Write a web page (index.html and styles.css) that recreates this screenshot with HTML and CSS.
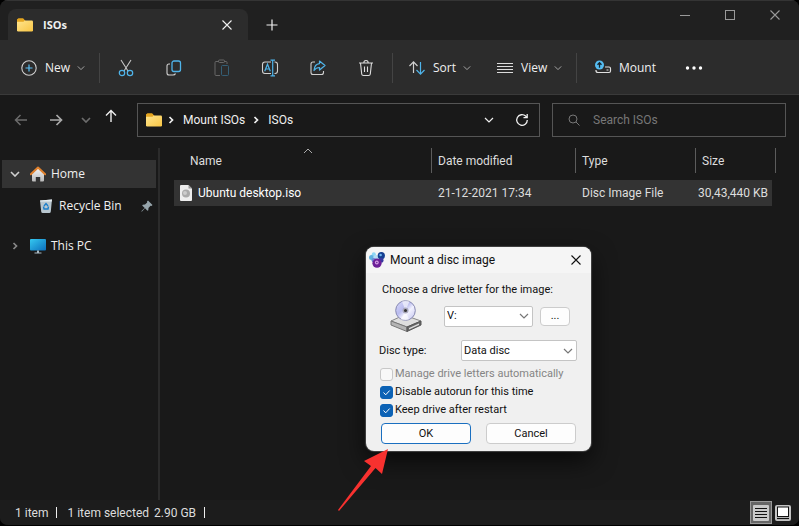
FILE: index.html
```html
<!DOCTYPE html>
<html lang="en">
<head>
<meta charset="utf-8">
<title>ISOs</title>
<link rel="stylesheet" href="styles.css">
</head>
<body>
<svg class="defs" aria-hidden="true">
  <defs>
    <linearGradient id="gold" x1="0" y1="0" x2="1" y2="1"><stop offset="0" stop-color="#ffe58e"/><stop offset="1" stop-color="#f8c544"/></linearGradient>
    <linearGradient id="screen" x1="0" y1="0" x2="1" y2="1"><stop offset="0" stop-color="#35c8f0"/><stop offset="1" stop-color="#0c6fbd"/></linearGradient>
    <linearGradient id="wall" x1="0" y1="0" x2="0" y2="1"><stop offset="0" stop-color="#f5f5f5"/><stop offset="1" stop-color="#b9b9b9"/></linearGradient>
    <linearGradient id="disc" x1="0" y1="0" x2="1" y2="1"><stop offset="0" stop-color="#d9dafa"/><stop offset=".4" stop-color="#b9bbee"/><stop offset=".6" stop-color="#f2f2ff"/><stop offset="1" stop-color="#c0c1ee"/></linearGradient>
    <symbol id="folder" viewBox="0 0 16 14"><path d="M0 2Q0 .5 1.500 .5H6L8 2.500V7H0Z" fill="#e5a51f"/><rect y="2.500" width="16" height="11" rx="1.200" fill="url(#gold)"/><path d="M0 3Q0 .5 1.500 .5H6Q7 .5 7.500 2.500L6.500 3.800H0Z" fill="#e5a51f"/></symbol>
    <symbol id="down" viewBox="0 0 10 6"><path d="M1 1l4 4 4-4" fill="none" stroke="currentColor" stroke-width="1.200"/></symbol>
    <symbol id="right" viewBox="0 0 6 10"><path d="M1.500 2L4.500 5 1.500 8" fill="none" stroke="currentColor" stroke-width="1.700"/></symbol>
    <symbol id="cross" viewBox="0 0 10 10"><path d="M.5 .5l9 9M9.500 .5l-9 9" fill="none" stroke="currentColor" stroke-width="1.100"/></symbol>
  </defs>
</svg>
<div class="window">
  <header class="titlebar">
    <div class="tab">
      <svg class="i-folder"><use href="#folder"/></svg>
      <span class="tab-name">ISOs</span>
      <button class="plain tab-close" aria-label="Close tab"><svg width="10" height="10"><use href="#cross"/></svg></button>
    </div>
    <button class="plain new-tab" aria-label="New tab"><svg width="12" height="12" viewBox="0 0 12 12"><path d="M6 .5v11M.5 6h11" stroke="currentColor" stroke-width="1.200"/></svg></button>
    <div class="controls">
      <button class="plain" aria-label="Minimize"><svg width="10" height="10" viewBox="0 0 10 10"><path d="M0 5.500h10" stroke="currentColor"/></svg></button>
      <button class="plain" aria-label="Maximize"><svg width="10" height="10" viewBox="0 0 10 10"><rect x=".5" y=".5" width="9" height="9" fill="none" stroke="currentColor"/></svg></button>
      <button class="plain" aria-label="Close"><svg width="10" height="10"><use href="#cross"/></svg></button>
    </div>
  </header>

  <div class="toolbar">
    <button class="plain tool new"><svg width="18" height="18" viewBox="0 0 18 18" fill="none"><circle cx="9" cy="9" r="7.200" stroke="#d0d0d0" stroke-width="1.100"/><path d="M9 5.500v7M5.500 9h7" stroke="#5bc0f5" stroke-width="1.200"/></svg>New<svg class="chev"><use href="#down"/></svg></button>
    <span class="sep"></span>
    <div class="icons">
      <button class="plain" aria-label="Cut"><svg width="18" height="18" viewBox="0 0 18 18" fill="none"><path d="M4 1l7 11M14 1L7 12" stroke="#c8c8c8" stroke-width="1.100"/><circle cx="5" cy="14" r="2.700" stroke="#4fb4ea" stroke-width="1.200"/><circle cx="13" cy="14" r="2.700" stroke="#4fb4ea" stroke-width="1.200"/></svg></button>
      <button class="plain" aria-label="Copy"><svg width="18" height="18" viewBox="0 0 18 18" fill="none"><path d="M5 5H4Q2 5 2 7V14Q2 16 4 16H8Q10 16 10.500 14.500" stroke="#d0d0d0" stroke-width="1.100"/><rect x="7" y="2" width="8.500" height="10.500" rx="2" stroke="#4fb4ea" stroke-width="1.300"/></svg></button>
      <button class="plain" aria-label="Paste"><svg width="18" height="18" viewBox="0 0 18 18" fill="none"><path d="M6 2.500H3Q2 2.500 2 3.500V15.500Q2 16.500 3 16.500H7M11 2.500H13Q14 2.500 14 3.500V5" stroke="#676767"/><rect x="5.500" y="1" width="6" height="2.500" rx="1" stroke="#676767"/><rect x="8.500" y="6.500" width="7" height="10" rx="1" stroke="#345f76"/></svg></button>
      <button class="plain" aria-label="Rename"><svg width="18" height="18" viewBox="0 0 18 18" fill="none"><path d="M10 3H4Q1.500 3 1.500 5.500V12Q1.500 14.500 4 14.500H10M13.500 3H14Q16.500 3 16.500 5.500V12Q16.500 14.500 14 14.500H13.500" stroke="#d0d0d0" stroke-width="1.100"/><path d="M3.700 12.300L6.500 5.200 9.300 12.300M4.700 10h3.600M11.700 1.500v15M9.500 1.200h4.500M9.500 16.800h4.500" stroke="#4fb4ea" stroke-width="1.200"/></svg></button>
      <button class="plain" aria-label="Share"><svg width="18" height="18" viewBox="0 0 18 18" fill="none"><path d="M6 3H4Q2 3 2 5V13.500Q2 15.500 4 15.500H12.500Q14.500 15.500 14.500 13.500V12" stroke="#d0d0d0" stroke-width="1.100"/><path d="M10.500 2L16 6.500 10.500 11V8.500Q7 8.500 5 11.500Q5.500 5 10.500 4.600Z" stroke="#4fb4ea" stroke-width="1.200" stroke-linejoin="round"/></svg></button>
      <button class="plain" aria-label="Delete"><svg width="18" height="18" viewBox="0 0 18 18" fill="none" stroke="#dcdcdc" stroke-width="1.100"><path d="M2 4H16M3.500 4L4.700 15Q4.900 16.500 6.400 16.500H11.600Q13.100 16.500 13.300 15L14.500 4M6.800 4Q6.800 1.500 9 1.500T11.200 4M7.500 7.500V13M10.500 7.500V13"/></svg></button>
    </div>
    <span class="sep"></span>
    <button class="plain tool sort"><svg width="18" height="18" viewBox="0 0 18 18" fill="none" stroke-width="1.200"><path d="M5.500 14V3M1.500 7l4-4.200 4 4.200" stroke="#d0d0d0"/><path d="M12.500 3V15M8.500 11l4 4.200 4-4.200" stroke="#4fb4ea"/></svg>Sort<svg class="chev"><use href="#down"/></svg></button>
    <button class="plain tool view"><svg width="18" height="18" viewBox="0 0 18 18"><path d="M1 4.500h16M1 7.500h16M1 10.500h16M1 13.500h16" stroke="#dcdcdc"/></svg>View<svg class="chev"><use href="#down"/></svg></button>
    <span class="sep"></span>
    <button class="plain tool mount"><svg width="18" height="18" viewBox="0 0 18 18" fill="none"><path d="M2 11v.5Q2 13.500 4 13.500H15Q16.500 13.500 16.500 12V9.500Q16.500 8 15 8H11" stroke="#e0e0e0" stroke-width="1.200"/><path d="M12.500 11h2" stroke="#e0e0e0"/><circle cx="5.500" cy="6" r="4.500" fill="#55bdf2"/><path d="M5.500 8.800V3.800M3.500 5.700l2-2 2 2" stroke="#16242c" stroke-width="1.300"/></svg>Mount</button>
    <button class="plain more" aria-label="See more"><svg width="18" height="6" viewBox="0 0 18 6" fill="#fff"><circle cx="2.500" cy="3" r="1.700"/><circle cx="9" cy="3" r="1.700"/><circle cx="15.500" cy="3" r="1.700"/></svg></button>
  </div>

  <div class="navbar">
    <nav class="arrows" aria-label="History">
      <button class="plain dim" aria-label="Back"><svg width="14" height="12" viewBox="0 0 14 12" fill="none" stroke="currentColor" stroke-width="1.500"><path d="M13 6H1.500M6.500 1l-5 5 5 5"/></svg></button>
      <button class="plain" aria-label="Forward"><svg width="14" height="12" viewBox="0 0 14 12" fill="none" stroke="currentColor" stroke-width="1.700"><path d="M1 6H12.500M7.500 1l5 5-5 5"/></svg></button>
      <button class="plain dim recent" aria-label="Recent locations"><svg width="10" height="6" viewBox="0 0 10 6"><path d="M1 1l4 4 4-4" fill="none" stroke="currentColor" stroke-width="1.700"/></svg></button>
      <button class="plain up" aria-label="Up"><svg width="12" height="14" viewBox="0 0 12 14" fill="none" stroke="currentColor" stroke-width="1.400"><path d="M6 13V1.500M1 6.500l5-5 5 5"/></svg></button>
    </nav>
    <div class="address">
      <svg class="i-folder"><use href="#folder"/></svg>
      <svg class="crumb-sep"><use href="#right"/></svg>
      <a class="crumb" href="#">Mount ISOs</a>
      <svg class="crumb-sep"><use href="#right"/></svg>
      <a class="crumb" href="#">ISOs</a>
      <button class="plain history" aria-label="Previous locations"><svg width="10" height="6"><use href="#down"/></svg></button>
      <button class="plain refresh" aria-label="Refresh"><svg width="14" height="14" viewBox="0 0 14 14" fill="none" stroke="currentColor" stroke-width="1.300"><path d="M12.300 7A5.300 5.300 0 1 1 10.600 3.100L12 4.500M12.200 1v3.700H8.500"/></svg></button>
    </div>
    <label class="search">
      <svg width="12" height="12" viewBox="0 0 12 12" fill="none" stroke="currentColor"><circle cx="5" cy="5" r="4"/><path d="M8 8l3.500 3.500"/></svg>
      <input type="search" placeholder="Search ISOs" aria-label="Search ISOs">
    </label>
  </div>

  <div class="main">
    <nav class="sidebar" aria-label="Folders">
      <a href="#" class="item active"><svg class="arrow" width="10" height="6" viewBox="0 0 10 6"><path d="M1 1l4 4 4-4" fill="none" stroke="#d0d0d0" stroke-width="1.600"/></svg>
        <svg width="16" height="16" viewBox="0 0 16 16"><path d="M2 7.500L8 2l6 5.500V14.500Q14 15.500 13 15.500H10.200V11H5.800V15.500H3Q2 15.500 2 14.500Z" fill="url(#wall)"/><path d="M.8 8.300L8 1.500l7.200 6.800" fill="none" stroke="#e0812d" stroke-width="2" stroke-linecap="round" stroke-linejoin="round"/></svg>Home</a>
      <a href="#" class="item child">
        <svg width="12" height="14" viewBox="0 0 12 14"><path d="M0 1.500L12 .5 10.800 12.500Q10.700 14 9.200 14H2.800Q1.300 14 1.200 12.500Z" fill="#b8c6cf"/><path d="M0 1.500L12 .5 11.800 2.500H.2Z" fill="#e4ebef"/><path d="M4 7L6 4.500 8 7M8.500 7.500L8 10H4L3.500 7.500" fill="none" stroke="#1d7fca" stroke-width="1.400"/></svg>Recycle Bin
        <svg class="pin" width="12" height="12" viewBox="0 0 12 12" fill="#96a4ab"><path d="M7 .5L11.500 5 10.500 6 9.500 5.800 7.500 8 7.300 10.300 6.500 10.800 4 8.300 1 11.500.3 11.500.5 11 3.700 8 1.200 5.500 1.800 4.700 4 4.500 6.200 2.500 6 1.500Z"/></svg></a>
      <a href="#" class="item pc"><svg class="arrow" width="10" height="10"><use href="#right"/></svg>
        <svg width="16" height="16" viewBox="0 0 16 16"><rect y="1" width="16" height="11.500" rx="1" fill="url(#screen)"/><path d="M7 12.500h2v2h2.500v1h-7v-1H7Z" fill="#a9bac3"/></svg>This PC</a>
    </nav>
    <main class="files">
      <table>
        <colgroup><col><col class="c-date"><col class="c-type"><col class="c-size"></colgroup>
        <thead><tr>
          <th><button class="plain head name">Name<svg class="asc" width="10" height="6" viewBox="0 0 10 6"><path d="M1 5l4-4 4 4" fill="none" stroke="#aaa"/></svg></button></th>
          <th><button class="plain head">Date modified</button></th>
          <th><button class="plain head">Type</button></th>
          <th><button class="plain head">Size</button></th>
        </tr></thead>
        <tbody><tr>
          <td><span class="file"><svg width="12" height="16" viewBox="0 0 12 16"><path d="M0 1Q0 0 1 0H8.500L12 3.500V15Q12 16 11 16H1Q0 16 0 15Z" fill="#eee"/><path d="M8.500 0V3.500H12Z" fill="#999"/><circle cx="6" cy="8.500" r="4" fill="#aaa"/><circle cx="5" cy="8" r="2" fill="#ccc"/></svg>Ubuntu desktop.iso</span></td>
          <td>21-12-2021 17:34</td>
          <td>Disc Image File</td>
          <td class="size">30,43,440 KB</td>
        </tr></tbody>
      </table>
    </main>
  </div>

  <footer class="status">
    <span>1 item</span><i class="bar"></i><span>1 item selected</span><span class="total">2.90 GB</span><i class="bar"></i>
    <div class="modes">
      <button class="plain mode on" aria-label="Details"><svg width="16" height="16" viewBox="0 0 16 16"><rect width="16" height="16" rx="1" fill="#c9c9c9"/><path d="M2 3.500h12M2 6.500h12M2 9.500h12M2 12.500h12" stroke="#111" stroke-width="1.200"/></svg></button>
      <button class="plain mode" aria-label="Large icons"><svg width="16" height="16" viewBox="0 0 16 16"><rect width="16" height="16" rx="2" fill="#c4c4c4"/><rect x="2.500" y="2" width="11" height="9.500" fill="#fff" stroke="#111"/><path d="M2 13.500h12" stroke="#111" stroke-width="1.200"/></svg></button>
    </div>
  </footer>
</div>

<form class="dialog" role="dialog" aria-labelledby="dialog-title">
  <div class="dialog-title">
    <svg width="16" height="16" viewBox="0 0 16 16"><circle cx="4.800" cy="2.300" r="2" fill="#8ed8f6"/><circle cx="2.500" cy="5.500" r="2.500" fill="#5fb0e0"/><circle cx="7" cy="5.500" r="2.600" fill="#b5dcf4"/><circle cx="4.800" cy="8.300" r="2.200" fill="#6a86d6"/><circle cx="12.300" cy="3.700" r="3.600" fill="#153f91"/><circle cx="11.600" cy="3" r="1.300" fill="#6fb6ee"/><circle cx="12" cy="8.200" r="2.500" fill="#3a3aa0"/><circle cx="8" cy="11.200" r="4.600" fill="#6c2098"/><circle cx="7.800" cy="10.500" r="1.900" fill="#d5a0e4"/><circle cx="7.800" cy="10.500" r=".8" fill="#6c2098"/></svg>
    <span id="dialog-title">Mount a disc image</span>
    <button type="button" class="plain" aria-label="Close"><svg width="10" height="10"><use href="#cross"/></svg></button>
  </div>
  <div class="dialog-body">
    <label class="prompt" for="drive">Choose a drive letter for the image:</label>
    <div class="drive-row">
      <svg width="32" height="32" viewBox="0 0 32 32"><path d="M1 21L14 15 31 21 17 27Z" fill="#dedede" stroke="#888"/><path d="M1 21L17 27V31.500L1 25Z" fill="#b4b4b4" stroke="#777"/><path d="M17 27L31 21V25L17 31.500Z" fill="#666" stroke="#555"/><path d="M19 28L29 23.600V25L19 29.500Z" fill="#ddd"/><circle cx="15.500" cy="10.500" r="9.800" fill="url(#disc)" stroke="#8587b0"/><path d="M15.500 10.500L12 1.500Q16 0 19.500 1.500ZM15.500 10.500L19 19.500Q15 21 11 19.500Z" fill="#fff" opacity=".6"/><circle cx="15.500" cy="10.500" r="3" fill="#aaa9bd"/><circle cx="15.500" cy="10.500" r="1.500" fill="#333"/></svg>
      <span class="select drive"><select id="drive"><option>V:</option></select><svg class="chev"><use href="#down"/></svg></span>
      <button type="button" class="btn browse">...</button>
    </div>
    <div class="type-row">
      <label for="type">Disc type:</label>
      <span class="select"><select id="type"><option>Data disc</option></select><svg class="chev"><use href="#down"/></svg></span>
    </div>
    <label class="check off"><input type="checkbox" disabled>Manage drive letters automatically</label>
    <label class="check"><input type="checkbox" checked><svg class="tick" viewBox="0 0 13 13"><path d="M3.500 6.500l2.200 2.300 4-4.300" fill="none" stroke="#fff"/></svg>Disable autorun for this time</label>
    <label class="check"><input type="checkbox" checked><svg class="tick" viewBox="0 0 13 13"><path d="M3.500 6.500l2.200 2.300 4-4.300" fill="none" stroke="#fff"/></svg>Keep drive after restart</label>
    <div class="actions"><button type="button" class="btn primary">OK</button><button type="button" class="btn">Cancel</button></div>
  </div>
</form>
<svg class="pointer" viewBox="0 0 52 64" aria-hidden="true"><path d="M51 1L45 26 38.500 20 2 63 1 62 34 18 27 13Z" fill="#f8312f"/></svg>
</body>
</html>
```
FILE: styles.css
```css
* { box-sizing: border-box; }
body {
  margin: 0;
  background: #000;
  color: #f0f0f0;
  font: 12px/16px Roboto, "Open Sans", sans-serif;
}
svg { display: block; flex: none; }
a { color: inherit; text-decoration: none; }
.defs { position: absolute; width: 0; height: 0; }
.plain {
  display: flex;
  align-items: center;
  justify-content: center;
  padding: 0;
  border: 0;
  background: none;
  color: inherit;
  font: inherit;
}
.i-folder { width: 16px; height: 14px; }
.chev { width: 10px; height: 6px; color: #aaa; }

.window {
  display: flex;
  flex-direction: column;
  min-height: 100vh;
  border-bottom: 1px solid #000;
  border-radius: 8px;
  background: #191919;
  overflow: hidden;
}

.titlebar, .toolbar, .sidebar { font-family: "Open Sans", "Noto Sans", sans-serif; }
.titlebar {
  display: flex;
  align-items: flex-start;
  height: 40px;
  padding: 0 2px 0 8px;
  border-top: 1px solid #343434;
  background: #202020;
}
.tab {
  display: flex;
  align-items: center;
  width: 240px;
  height: 31px;
  margin-top: 8px;
  padding: 0 16px 0 9px;
  border-radius: 8px 8px 0 0;
  background: #2c2c2c;
}
.tab-name { margin-left: 10px; font-size: 11px; font-weight: 700; }
.tab-close { margin-left: auto; }
.new-tab { width: 48px; height: 31px; margin-top: 8px; }
.controls { display: flex; margin-left: auto; color: #999; }
.controls .plain { width: 45px; height: 28px; }

.toolbar {
  display: flex;
  align-items: center;
  height: 55px;
  padding-top: 1px;
  border-bottom: 1px solid #3a3a3a;
  background: #2c2c2c;
}
.sep { width: 1px; height: 30px; background: #444; }
.icons { display: flex; margin: 0 2px; }
.icons .plain { width: 48px; height: 40px; }
.tool { justify-content: flex-start; gap: 7px; height: 40px; }
.tool .chev { width: 8px; margin-left: auto; }
.new { width: 99px; padding: 0 16px 0 20px; }
.sort { width: 94px; padding: 0 18px 0 15px; }
.view { width: 89px; padding: 0 16px 0 9px; }
.mount { width: 93px; padding-left: 17px; }
.more { width: 48px; height: 40px; }

.navbar {
  display: grid;
  grid-template-columns: 137px 403fr 246fr;
  align-items: center;
  height: 53px;
  padding: 0 13px 4px 0;
}
.arrows { display: flex; align-items: center; padding-left: 3px; color: #aaa; }
.arrows .plain { width: 35px; height: 34px; }
.arrows .recent { width: 26px; }
.arrows .up { width: 24px; padding-bottom: 8px; color: #f0f0f0; }
.arrows .dim { color: #6c6c6c; }
.address, .search {
  display: flex;
  align-items: center;
  height: 34px;
  border: 1px solid #555;
}
.address { padding: 0 10px 0 8px; }
.crumb-sep { width: 6px; height: 10px; margin-left: 6px; }
.crumb { margin-left: 9px; }
.crumb + .crumb-sep { margin-left: 8px; }
.history { width: 24px; height: 24px; margin-left: auto; }
.refresh { width: 24px; height: 24px; margin-left: 9px; margin-right: -5px; }
.search { min-width: 0; margin-left: 12px; padding-left: 15px; color: #777; }
.search input {
  flex: 1;
  min-width: 0;
  margin-left: 13px;
  padding: 0;
  border: 0;
  outline: 0;
  background: none;
  color: #eee;
  font: inherit;
}
.search input::placeholder { color: #777; opacity: 1; }

.main { display: flex; flex: 1; }
.sidebar {
  width: 160px;
  padding: 12px 2px 0 2px;
  border-right: 2px solid #2b2b2b;
}
.item { display: flex; align-items: center; gap: 5px; height: 28px; padding-left: 8px; }
.active { background: #333; }
.arrow { margin-right: 5px; color: #888; }
.child { margin-top: 4px; padding: 0 3px 0 38px; gap: 7px; }
.pin { margin-left: auto; }
.pc { margin-top: 12px; }

.files { flex: 1; padding: 0 23px 0 14px; }
table { width: 100%; table-layout: fixed; border-spacing: 0; }
.c-date { width: 144px; }
.c-type { width: 120px; }
.c-size { width: 80px; }
th { padding: 0 0 7px; font-weight: 400; }
.head {
  position: relative;
  justify-content: flex-start;
  width: 100%;
  height: 25px;
  padding-left: 6px;
  border-right: 1px solid #5c5c5c;
  color: #ddd;
}
.name { padding-left: 16px; }
.asc { position: absolute; top: 0; left: 50%; }
td { height: 26px; padding: 0 0 0 6px; background: #333; color: #ddd; white-space: nowrap; }
.file { display: flex; align-items: center; gap: 6px; color: #fff; }
.size { padding: 0 4px 0 0; border-right: 4px solid #191919; text-align: right; }

.status {
  display: flex;
  align-items: center;
  height: 25px;
  padding: 0 8px 0 15px;
  background: #1c1c1c;
  color: #ddd;
}
.bar { width: 1px; height: 11px; margin: 0 10px 0 8px; background: #eee; }
.total { margin-left: 5px; }
.modes { display: flex; align-items: center; gap: 3px; margin-left: auto; }
.on { width: 22px; height: 23px; border: 1px solid #999; background: #666; }

.dialog {
  position: absolute;
  top: 247px;
  left: 366px;
  width: 225px;
  border-radius: 8px;
  background: #f0f0f0;
  box-shadow: 0 0 1px 1px #444, 0 10px 24px #000a;
  color: #111;
  font: 11px/14px Roboto, "Open Sans", sans-serif;
  overflow: hidden;
}
.dialog-title {
  display: flex;
  align-items: center;
  gap: 5px;
  height: 26px;
  padding: 0 10px 0 3px;
  background: #f5f5f5;
  font-size: 12px;
}
.dialog-title .plain { margin-left: auto; }
.dialog-body { padding: 10px 14px 7px 13px; }
.prompt { display: block; margin: 0 0 3px 3px; white-space: nowrap; }
.drive-row { display: flex; align-items: center; padding: 0 7px 0 11px; }
.drive { flex: 1; margin: 0 7px 0 22px; }
.type-row { display: flex; align-items: center; justify-content: space-between; margin: 8px 0 4px; }
.type-row .select { width: 116px; }
.select { display: grid; align-items: center; }
.select select {
  grid-area: 1 / 1;
  width: 100%;
  height: 21px;
  padding: 0 2px;
  border: 1px solid #c4c4c4;
  border-radius: 2px;
  appearance: none;
  background: #fff;
  color: #111;
  font: inherit;
}
.select .chev { grid-area: 1 / 1; justify-self: end; margin-right: 4px; color: #777; pointer-events: none; }
.btn {
  height: 21px;
  padding: 0;
  border: 1px solid #ccc;
  border-radius: 4px;
  background: #fdfdfd;
  color: #111;
  font: inherit;
}
.browse { width: 30px; height: 19px; }
.check {
  display: grid;
  grid-template-columns: 13px 1fr;
  gap: 2px;
  align-items: center;
  height: 18px;
  padding-left: 1px;
  white-space: nowrap;
}
.check input {
  grid-area: 1 / 1;
  width: 13px;
  height: 13px;
  margin: 0;
  border: 1px solid #c8c8c8;
  border-radius: 3px;
  appearance: none;
  background: #f8f8f8;
}
.check input:checked { border-color: #0c62b5; background: #0c62b5; }
.tick { grid-area: 1 / 1; width: 13px; height: 13px; z-index: 1; pointer-events: none; }
.off { color: #858585; }
.actions { display: grid; grid-template-columns: 1fr 1fr; gap: 15px; margin: 4px 1px 0 2px; }
.primary { border-color: #1a6fc0; }

.pointer { position: absolute; top: 448px; left: 337px; width: 52px; height: 64px; }
```
